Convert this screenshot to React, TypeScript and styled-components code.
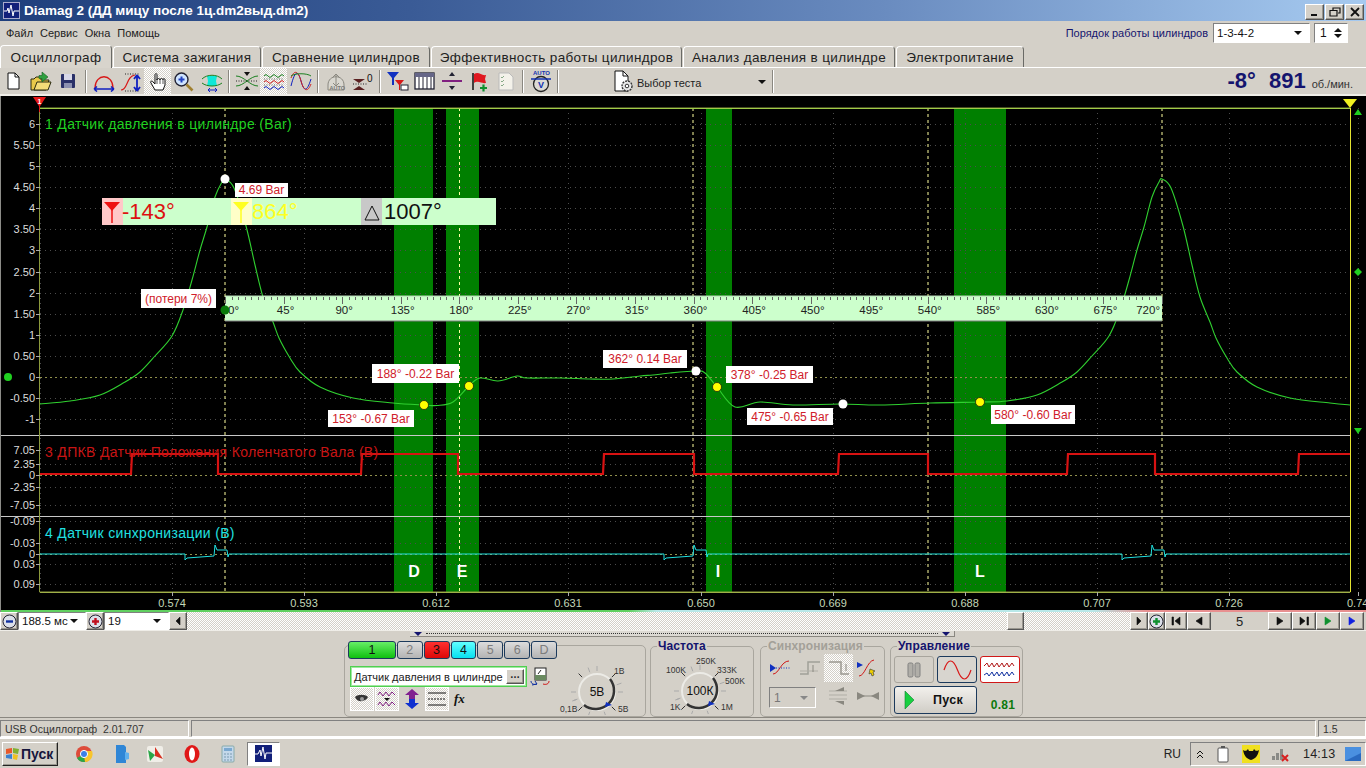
import React from "react";
import styled, { createGlobalStyle, css } from "styled-components";

const Global = createGlobalStyle`
  html, body { margin: 0; padding: 0; background: #d4d0c8; overflow: hidden; }
  * { box-sizing: border-box; }
`;

const raised = css`
  border: 1px solid;
  border-color: #fff #555 #555 #fff;
  box-shadow: inset -1px -1px #9a978f;
  background: #d4d0c8;
`;
const sunken = css`
  border: 1px solid;
  border-color: #808080 #fff #fff #808080;
`;
const dither = css`
  background: repeating-conic-gradient(#fff 0 25%, #d4d0c8 0 50%) 0 0 / 2px 2px;
`;

const Page = styled.div`
  width: 1366px; height: 768px; overflow: hidden; display: flex; flex-direction: column;
  background: #d4d0c8; font-family: "Liberation Sans", Arial, sans-serif; color: #111;
`;
const TitleBar = styled.div`
  height: 21px; flex: none; display: flex; align-items: center; padding: 0 2px 0 3px;
  background: linear-gradient(90deg, #1f3f7c 0%, #3a5b96 30%, #6a8cc0 65%, #a6caf0 100%);
`;
const TitleText = styled.div`
  flex: 1; margin-left: 4px; color: #fff; font-weight: bold; font-size: 13.5px; white-space: nowrap;
`;
const WinButton = styled.div`
  ${raised}; width: 19px; height: 16px; margin-top: 3px; margin-left: 1px; display: flex; align-items: center; justify-content: center;
`;
const MenuRow = styled.div`
  height: 24px; flex: none; display: flex; align-items: center; padding-left: 6px; gap: 7px; font-size: 11px;
`;
const MenuItem = styled.span` color: #222; `;
const OrderBox = styled.div`
  flex: 1; display: flex; align-items: center; justify-content: flex-end;
`;
const OrderLabel = styled.span` color: #14146e; font-size: 11px; margin-right: 5px; `;
const Combo = styled.div<{ $w: number; $h?: number }>`
  ${sunken}; width: ${p => p.$w}px; height: ${p => p.$h ?? 20}px; background: #fff; display: flex; align-items: center;
  justify-content: space-between; padding: 0 7px 0 3px; font-size: 11.5px; color: #111; white-space: nowrap;
`;
const Arrow = styled.i<{ $c?: string }>`
  display: block; width: 0; height: 0; border-left: 4px solid transparent; border-right: 4px solid transparent;
  border-top: 4px solid ${p => p.$c ?? "#111"};
`;
const Spin = styled.div`
  ${sunken}; width: 34px; height: 20px; margin: 0 18px 0 4px; background: #fff; display: flex; align-items: center; justify-content: space-between;
  padding: 0 5px; font-size: 12px;
`;
const SpinArrows = styled.div`
  display: flex; flex-direction: column; gap: 2px;
`;
const ArrowUp = styled.i`
  display: block; width: 0; height: 0; border-left: 4px solid transparent; border-right: 4px solid transparent; border-bottom: 4px solid #111;
`;
const TabRow = styled.div`
  height: 23px; flex: none; display: flex; align-items: flex-end; border-bottom: 1px solid #fff;
`;
const Tab = styled.div<{ $w: number; $active?: boolean }>`
  width: ${p => p.$w}px; height: ${p => (p.$active ? 23 : 21)}px; margin-right: 1px; padding-top: 1px;
  border: 1px solid #fff; border-right-color: #6a6a66; border-bottom: none; border-radius: 4px 4px 0 0;
  display: flex; align-items: center; justify-content: center; font-size: 13.5px; letter-spacing: 0.35px; color: #222;
  background: ${p => (p.$active ? "#d8d4cc" : "#d4d0c8")}; white-space: nowrap; position: relative;
  ${p => p.$active && "margin-bottom: -1px; z-index: 1;"}
`;
const Toolbar = styled.div`
  height: 28px; flex: none; display: flex; align-items: center; padding-left: 1px; border-bottom: 2px solid #f0eee8;
`;
const ToolButton = styled.div<{ $on?: boolean }>`
  width: 27px; height: 26px; flex: none; display: flex; align-items: center; justify-content: center;
  ${p => p.$on && dither}
`;
const ToolSep = styled.div`
  width: 8px; height: 23px; flex: none; display: flex; justify-content: center;
  &::before { content: ""; width: 2px; background: linear-gradient(90deg, #8a8780 50%, #fff 50%); }
`;
const TestSelect = styled.div`
  width: 207px; height: 26px; flex: none; display: flex; align-items: center; padding-left: 51px; font-size: 11px; color: #222; gap: 3px;
`;
const TestLabel = styled.span` padding-top: 3px; `;
const TestArrow = styled.div` margin-left: 54px; padding-top: 2px; `;
const Rpm = styled.div`
  flex: 1; display: flex; justify-content: flex-end; align-items: baseline; padding-right: 13px; color: #14146e;
`;
const RpmValue = styled.b<{ $gap: number }>`
  font-size: 22px; margin-right: ${p => p.$gap}px; font-weight: bold;
`;
const RpmUnit = styled.span` font-size: 11px; color: #333; `;

const ChartBox = styled.div`
  position: relative; height: 516px; flex: none; background: #000; border-left: 1px solid #8c8c88; overflow: hidden;
`;
const ChartSvg = styled.svg` position: absolute; left: -1px; top: 0; display: block; `;
const Caption = styled.div<{ $y: number; $c: string }>`
  position: absolute; left: 44px; top: ${p => p.$y}px; color: ${p => p.$c}; font-size: 14px; line-height: 16px; white-space: nowrap; letter-spacing: 0.33px;
`;
const Note = styled.div<{ $x: number; $y: number; $w: number; $h: number }>`
  position: absolute; left: ${p => p.$x - 1}px; top: ${p => p.$y}px; width: ${p => p.$w}px; height: ${p => p.$h}px;
  background: #fff; color: #d0202a; font-size: 12px; display: flex; align-items: center; justify-content: center; white-space: nowrap;
`;
const DeltaBar = styled.div`
  position: absolute; left: 101px; top: 102px; width: 394px; height: 27px; background: #ccffcc; display: flex;
`;
const DeltaIcon = styled.div<{ $bg: string }>`
  width: 21px; height: 27px; flex: none; background: ${p => p.$bg}; display: flex; align-items: center; justify-content: center;
`;
const DeltaText = styled.div<{ $c: string; $w: number; $ml: number }>`
  width: ${p => p.$w}px; margin-left: ${p => p.$ml}px; flex: none; color: ${p => p.$c}; font-size: 22px; line-height: 27px; white-space: nowrap;
`;
const BandLetter = styled.div<{ $x: number }>`
  position: absolute; left: ${p => p.$x - 1}px; top: 467px; width: 20px; text-align: center; color: #fff; font-weight: bold; font-size: 16px; line-height: 18px;
`;
const EdgeLine = styled.div`
  position: absolute; left: 0; right: 0; bottom: 0; height: 2px;
  background: linear-gradient(90deg, #60d060 0 46%, #b8e8e8 48% 80%, #e89090 84% 100%);
`;

const ScrollRow = styled.div`
  height: 18px; flex: none; display: flex; align-items: stretch;
`;
const MiniBtn = styled.div<{ $w: number }>`
  ${raised}; width: ${p => p.$w}px; flex: none; display: flex; align-items: center; justify-content: center;
`;
const Track = styled.div`
  ${dither}; width: 943px; flex: none; display: flex; padding-left: 820px;
`;
const Thumb = styled.div` ${raised}; width: 17px; `;
const PageNum = styled.div`
  width: 57px; flex: none; display: flex; align-items: center; justify-content: center; font-size: 13px; color: #222;
`;
const Splitter = styled.div`
  height: 7px; flex: none; padding-left: 410px; border-top: 1px solid #efede8;
`;
const SplitBar = styled.div`
  width: 545px; height: 6px; background: #dcd9d2; display: flex; align-items: center; justify-content: space-between; padding: 0 4px;
  border-bottom: 1px solid #8a8780; border-right: 1px solid #8a8780;
`;
const SplitDots = styled.div` flex: 1; margin: 0 4px; border-top: 1px dotted #333; `;
const Panels = styled.div`
  height: 81px; flex: none; display: flex; align-items: flex-start; padding: 8px 0 0 344px; border-bottom: 1px solid #8a8780;
`;
const Group = styled.fieldset<{ $w: number; $ml?: number; $legend?: boolean }>`
  width: ${p => p.$w}px; margin: 0 0 0 ${p => p.$ml ?? 0}px; padding: 0; border: 1px solid #a9a69e; border-radius: 5px; min-width: 0; flex: none; position: relative;
  height: ${p => (p.$legend ? 77 : 72)}px; ${p => p.$legend && "margin-top: -5px;"}
`;
const Legend = styled.legend<{ $muted?: boolean }>`
  font-size: 12px; font-weight: bold; color: ${p => (p.$muted ? "#a3a098" : "#14146e")}; padding: 0 1px; margin-left: 6px; line-height: 12px; letter-spacing: 0.1px;
`;
const GroupOne = styled.div` display: flex; margin-top: -5px; `;
const ChColumn = styled.div` width: 212px; flex: none; padding-left: 3px; `;
const ChRow = styled.div` display: flex; gap: 1px; `;
const ChBtn = styled.div<{ $w?: number; $bg?: string; $dim?: boolean }>`
  width: ${p => p.$w ?? 26}px; height: 18px; border: 1px solid #1c3a5c; border-radius: 3px; display: flex; align-items: center; justify-content: center;
  font-size: 12.5px; color: ${p => (p.$dim ? "#7d7d7d" : "#111")};
  background: ${p => p.$bg ?? "linear-gradient(#dcdcdc, #b4b4b4)"};
`;
const NameRow = styled.div` display: flex; align-items: center; margin: 7px 0 0 2px; gap: 3px; `;
const NameBox = styled.div`
  width: 177px; height: 21px; background: #fff; border: 1px solid #50d050; outline: 1px solid #a0e8a0; outline-offset: -2px; display: flex; align-items: center; justify-content: space-between;
  font-size: 11px; padding: 0 2px 0 3px; white-space: nowrap; color: #222;
`;
const DotsBtn = styled.div`
  ${raised}; width: 18px; height: 15px; font-size: 10px; line-height: 10px; text-align: center; font-weight: bold;
`;
const IconRow = styled.div` display: flex; align-items: center; gap: 1px; margin: 0 0 0 2px; `;
const IconCell = styled.div<{ $w?: number; $on?: boolean }>`
  width: ${p => p.$w ?? 24}px; height: 24px; flex: none; display: flex; align-items: center; justify-content: center;
  ${p => p.$on && css`${dither}; border: 1px solid #fff;`}
`;
const FxText = styled.span`
  font-family: "Liberation Serif", serif; font-style: italic; font-weight: bold; font-size: 13px; color: #111; margin-left: 4px;
`;
const KnobSpace = styled.div<{ $mt: number }>` margin-top: ${p => p.$mt}px; flex: none; line-height: 0; `;
const SyncGrid = styled.div` display: grid; grid-template-columns: repeat(4, 29px); margin: 2px 0 0 5px; grid-auto-rows: 28px; `;
const SyncCell = styled.div<{ $on?: boolean }>`
  display: flex; align-items: center; justify-content: center; ${p => p.$on && dither}
`;
const SyncCombo = styled.div`
  ${sunken}; grid-column: span 2; width: 47px; height: 21px; margin: 5px 0 0 3px; display: flex; align-items: center; justify-content: space-between; padding: 0 7px 0 4px;
  font-size: 12px; color: #777;
`;
const CtrlGrid = styled.div` display: grid; grid-template-columns: 43px 43px 43px; margin: 4px 0 0 3px; row-gap: 3px; `;
const CtrlBtn = styled.div<{ $c?: string; $bg?: string }>`
  height: 27px; width: 40px; border: 1px solid ${p => p.$c ?? "#1c3a5c"}; border-radius: 3px; display: flex; align-items: center; justify-content: center;
  background: ${p => p.$bg ?? "#d8d5cf"};
`;
const StartBtn = styled.div`
  grid-column: span 2; width: 83px; height: 28px; border: 1px solid #1c3a5c; border-radius: 3px; background: linear-gradient(#f2f0ec, #d0cdc6);
  display: flex; align-items: center; font-size: 12.5px; font-weight: bold; padding-left: 9px; letter-spacing: 0.3px; gap: 18px;
`;
const Ratio = styled.div`
  align-self: end; text-align: center; color: #0d7a0d; font-weight: bold; font-size: 12px; line-height: 18px; padding-left: 3px; letter-spacing: 0.3px;
`;

const StatusBar = styled.div`
  height: 20px; flex: none; display: flex; gap: 2px; padding-top: 2px; font-size: 10.5px; color: #333; border-bottom: 1px solid #fff;
`;
const StatusCell = styled.div<{ $w?: number; $grow?: boolean }>`
  ${sunken}; height: 17px; display: flex; align-items: center; padding-left: 4px;
  ${p => (p.$grow ? "flex: 1;" : `width: ${p.$w}px; flex: none;`)}
`;
const Taskbar = styled.div`
  height: 30px; flex: none; display: flex; align-items: center; padding-left: 2px; border-top: 1px solid #fff;
`;
const StartButton = styled.div`
  ${raised}; width: 56px; height: 24px; border-color: #fff #222 #222 #fff; display: flex; align-items: center; gap: 1px; padding-left: 2px;
  font-weight: bold; font-size: 14px; color: #16163c;
`;
const TaskIcon = styled.div<{ $ml: number; $active?: boolean }>`
  margin-left: ${p => p.$ml}px; width: ${p => (p.$active ? 33 : 24)}px; height: 24px; flex: none; display: flex; align-items: center; justify-content: center;
  ${p => p.$active && css`${sunken}; background: #fff;`}
`;
const TaskSpacer = styled.div` flex: 1; `;
const Lang = styled.span` font-size: 12px; margin-right: 9px; color: #222; `;
const Tray = styled.div`
  ${sunken}; width: 176px; height: 24px; display: flex; align-items: center; padding-left: 2px; font-size: 12.5px; color: #222;
`;
const TrayItem = styled.div<{ $w: number }>` width: ${p => p.$w}px; flex: none; display: flex; align-items: center; justify-content: center; `;
const Clock = styled.span` width: 40px; margin: 0 2px 0 6px; letter-spacing: 0.2px; white-space: nowrap; `;

const Svg = ({ w = 22, h = 22, children }: { w?: number; h?: number; children: React.ReactNode }) => (
  <svg width={w} height={h} viewBox={`0 0 ${w} ${h}`} fill="none">{children}</svg>
);
const IDoc = () => <Svg><path d="M4 3h7l4 4v12H4z" fill="#fff" stroke="#111" /><path d="M11 3v4h4" stroke="#111" /></Svg>;
const IOpen = () => <Svg w={24}><path d="M1 20V9h3l2-2h5v3h8l-3 10z" fill="#e8c84a" stroke="#2a2a10" /><path d="M4 20l3-8h14l-3 8z" fill="#f4dc78" stroke="#2a2a10" /><path d="M12 2l6 5-6 5V8.500H9v-3h3z" fill="#30a040" stroke="#156020" strokeWidth=".6" /></Svg>;
const ISave = () => <Svg><rect x="3" y="4" width="14" height="14" rx="1" fill="#2a3068" /><rect x="6" y="4" width="8" height="6" fill="#d8d8e8" /><rect x="6" y="13" width="8" height="5" fill="#8c90b0" /></Svg>;
const IArch = () => <Svg w={26}><path d="M4 18C4 3 22 3 22 18" stroke="#d81818" strokeWidth="1.3" /><path d="M3 19h20M3 19l3-2.500M3 19l3 2.500M23 19l-3-2.500M23 19l-3 2.500" stroke="#1020c0" strokeWidth="1.6" /></Svg>;
const ISRise = () => <Svg w={26}><path d="M3 20C10 20 8 6 17 5" stroke="#d81818" strokeWidth="1.2" /><path d="M7 4h15M7 21h15" stroke="#222" strokeDasharray="1 1.500" /><path d="M19 5v16M19 5l-3 4M19 5l3 4M19 21l-3-4M19 21l3-4" stroke="#1020c0" strokeWidth="1.8" /></Svg>;
const IHand = () => <Svg><path d="M6 12c-2-2-3 0-2 1l4 7h8l2-5v-5c0-2-2-2-2 0 0-2-3-2-3 0 0-2-3-2-3 0V5c0-2-2-2-2 0v9z" fill="#fff" stroke="#111" /><path d="M10 9v5M13 9v5M16 10v4" stroke="#111" strokeWidth=".7" /></Svg>;
const IZoom = () => <Svg w={24}><circle cx="8.500" cy="9.500" r="6.500" fill="#cfe4ff" stroke="#223" strokeWidth="1.400" /><path d="M13.500 14.500l6 6" stroke="#a08030" strokeWidth="2.600" /><path d="M5.500 9.500h6M8.500 6.500v6" stroke="#2040c0" strokeWidth="2" /></Svg>;
const ICyan = () => <Svg w={24}><path d="M7 6h10l-1 5 1 5H7l1-5z" fill="#10e8d8" /><path d="M2 9c5-5 15-5 20 0M2 13c5 4 15 4 20 0" stroke="#1a8020" /><path d="M8 20h9M8 20l2-2M8 20l2 2M17 20l-2-2M17 20l-2 2" stroke="#1020c0" /></Svg>;
const ICross = () => <Svg w={26}><path d="M2 6c8 0 14 10 22 10M2 16c8 0 14-10 22-10" stroke="#1a8020" /><path d="M2 11h22" stroke="#222" strokeDasharray="1 1.500" /><path d="M10 2h6l-3 4zM10 20h6l-3-4z" fill="#111" /></Svg>;
const IWaves = () => <Svg w={24}><path d="M2 6q2-3 4 0t4 0 4 0 4 0 4 0" stroke="#1a8020" /><path d="M2 12q2-3 4 0t4 0 4 0 4 0 4 0" stroke="#d02020" /><path d="M2 18q2-3 4 0t4 0 4 0 4 0 4 0" stroke="#1020c0" /><path d="M2 9h20M2 15h20" stroke="#333" strokeDasharray="1 1.500" strokeWidth=".7" /></Svg>;
const IWaves2 = () => <Svg w={24}><path d="M2 16C6 0 9 0 12 11s6 11 10-2" stroke="#1020c0" /><path d="M2 8c3-8 7-8 10 3s7 11 10 3" stroke="#d02020" /><path d="M2 6c4-3 16-3 20 0" stroke="#1a8020" /></Svg>;
const IAuto = () => <Svg w={24}><path d="M4 15C4 4 20 4 20 15v5H4z" fill="#d9d7d0" stroke="#8a8880" /><path d="M12 5v10M9 7l3-3 3 3M9 13l3 3 3-3" stroke="#8a8880" /><text x="5.500" y="20" fontSize="5.500" fontFamily="Liberation Sans" fontWeight="bold" fill="#777">AUTO</text></Svg>;
const IZero = () => <Svg w={26}><path d="M3 9l6 4 6-4zM3 20l6-4 6 4z" fill="#5a2020" /><path d="M3 14h14" stroke="#222" strokeDasharray="1 1.500" /><text x="17" y="12" fontSize="10" fontFamily="Liberation Sans" fill="#111">0</text></Svg>;
const IFilter = () => <Svg w={24}><path d="M1 2h12l-5 6v7H6V8z" fill="#1030c0" /><path d="M9 10h9l-4 5v5h-1v-5z" fill="#d81818" /><rect x="15" y="15" width="7" height="5" fill="#fff" stroke="#223" /></Svg>;
const ITable = () => <Svg w={24}><rect x="2" y="3" width="19" height="16" fill="#fff" stroke="#223" strokeWidth="1.300" /><rect x="2" y="3" width="19" height="4" fill="#668" /><path d="M6 7v12M10 7v12M14 7v12M18 7v12" stroke="#223" /></Svg>;
const ILines = () => <Svg w={24}><path d="M2 11h20" stroke="#802080" strokeWidth="2" /><path d="M9 6h6l-3-4zM9 16h6l-3 4z" fill="#223" /></Svg>;
const IFlag = () => <Svg w={24}><path d="M6 3v17" stroke="#111" strokeWidth="1.500" /><path d="M7 4c5-3 7 2 12 1l-1 4 1 4c-5 1-7-3-12 0z" fill="#e01820" /><path d="M13 18h7M16.500 14.500v7" stroke="#109030" strokeWidth="2.200" /></Svg>;
const IChecklist = () => <Svg><path d="M4 3h10l4 4v13H4z" fill="#f4f2ea" stroke="#bbb" /><path d="M6 7l1 1 2-2M6 11l1 1 2-2M6 15l1 1 2-2" stroke="#8a8" /></Svg>;
const IAutoV = () => <Svg w={24} h={24}><text x="4" y="6" fontSize="6" fontFamily="Liberation Sans" fontWeight="bold" fill="#1030b0">AUTO</text><circle cx="12" cy="15" r="7.500" fill="#dcdad4" stroke="#222" strokeWidth="1.300" /><text x="9" y="19" fontSize="9" fontFamily="Liberation Sans" fontWeight="bold" fill="#1030b0">V</text><path d="M2 10h20" stroke="#1030b0" strokeWidth="1.500" /></Svg>;
const IGearDoc = () => <Svg w={21} h={24}><path d="M2 2h8l5 5v15H2z" fill="#fff" stroke="#111" /><path d="M10 2v5h5" stroke="#111" /><circle cx="14" cy="17" r="5" fill="#e8e8e8" stroke="#333" strokeWidth="1.400" strokeDasharray="2 1" /><circle cx="14" cy="17" r="1.800" fill="#fff" stroke="#333" /></Svg>;

const Filter = ({ c }: { c: string }) => <Svg w={17} h={26}><path d="M0 3h16L8 12z" fill={c} /><path d="M8 10v14" stroke={c} strokeWidth="1.500" /></Svg>;
const Tri = () => <Svg w={16} h={22}><path d="M1 19L8 5l7 14z" stroke="#111" fill="#c8c8c8" /></Svg>;

type Mark = { t: string; x: number; y: number };
const knobTicks = [-225, -200, -180, -135, -110, -90, -45, -20, 0, 45, 70, 110, 135, 160];
const Knob = ({ label, cx, cy, w, h, marks }: { label: string; cx: number; cy: number; w: number; h: number; marks: Mark[] }) => (
  <svg width={w} height={h} viewBox={`0 0 ${w} ${h}`} fill="none">
    {knobTicks.map((a, i) => {
      const r = a * Math.PI / 180;
      return <line key={i} x1={cx + Math.cos(r) * 21} y1={cy + Math.sin(r) * 21} x2={cx + Math.cos(r) * 26} y2={cy + Math.sin(r) * 26} stroke={i % 3 === 0 ? "#333" : "#aaa"} strokeWidth="1" />;
    })}
    <circle cx={cx} cy={cy} r={18} fill="#d4d0c8" stroke="#ecebe6" strokeWidth="2" />
    <path d={`M${cx + 13} ${cy - 13}A18.500 18.500 0 0 1 ${cx - 13} ${cy + 13}`} stroke="#333" strokeWidth="2.500" />
    <path d={`M${cx + 9} ${cy + 10}l6 3-7 2z`} fill="#1030c0" />
    <text x={cx} y={cy + 4} textAnchor="middle" fontFamily="Liberation Sans" fontSize="12" fill="#111">{label}</text>
    {marks.map(m => <text key={m.t} x={m.x} y={m.y} fontFamily="Liberation Sans" fontSize="8.500" fill="#333">{m.t}</text>)}
  </svg>
);

const yLabels1: [string, number][] = [["6", 124], ["5.50", 145], ["5", 166], ["4.50", 187], ["4", 208], ["3.50", 229], ["3", 250], ["2.50", 272], ["2", 293], ["1.50", 314], ["1", 335], ["0.50", 356], ["0", 377], ["-0.50", 398], ["-1", 419]];
const yLabels3: [string, number][] = [["7.05", 450], ["2.35", 464], ["0", 475], ["-2.35", 487], ["-7.05", 505]];
const yLabels4: [string, number][] = [["-0.09", 521], ["-0.03", 543], ["0", 554], ["0.03", 564], ["0.09", 584]];
const xLabels: [string, number][] = [["0.574", 172], ["0.593", 304], ["0.612", 436], ["0.631", 568], ["0.650", 701], ["0.669", 833], ["0.688", 965], ["0.707", 1097], ["0.726", 1229], ["0.74", 1358]];

const peak: [number, number][] = [[40, 404], [70, 401], [100, 395], [125, 382], [140, 372], [155, 356], [172, 336], [183, 310], [192, 280], [200, 250], [207, 227], [215, 197], [222, 182], [225, 179], [234, 188], [246, 226], [255, 265], [263, 297], [273, 322], [279, 338], [290, 358], [300, 372], [320, 387], [353, 398], [393, 403], [424, 405], [437, 405.500]];
const mid: [number, number][] = [[453, 402], [469, 386], [480, 378], [498, 381], [517, 376], [527, 378], [560, 378], [590, 379], [613, 379], [640, 376], [653, 375], [670, 373], [696, 371], [705, 373], [717, 387], [735, 407], [760, 402], [793, 405], [840, 404], [880, 405], [930, 403], [980, 402]];
const peak2 = peak.filter(p => p[0] > 60 && p[0] <= 415).map(p => [p[0] + 937, p[1]] as [number, number]);
const smooth = (pts: [number, number][]) => {
  let d = `M${pts[0][0]} ${pts[0][1]}`;
  for (let i = 0; i < pts.length - 1; i++) {
    const p0 = pts[Math.max(i - 1, 0)];
    const p1 = pts[i];
    const p2 = pts[i + 1];
    const p3 = pts[Math.min(i + 2, pts.length - 1)];
    const c1 = [p1[0] + (p2[0] - p0[0]) / 6, p1[1] + (p2[1] - p0[1]) / 6];
    const c2 = [p2[0] - (p3[0] - p1[0]) / 6, p2[1] - (p3[1] - p1[1]) / 6];
    d += `C${c1[0].toFixed(1)} ${c1[1].toFixed(1)} ${c2[0].toFixed(1)} ${c2[1].toFixed(1)} ${p2[0]} ${p2[1]}`;
  }
  return d;
};
const greenPath = smooth([...peak, ...mid, ...peak2, [1350, 405]]);

const redEdges = [131, 218, 361, 458, 603, 694, 838, 928, 1067, 1155, 1298];
const redPts = (() => {
  const out: string[] = ["40,474"];
  let high = false;
  redEdges.forEach(x => {
    const a = high ? 454 : 474;
    const b = high ? 474 : 454;
    out.push(`${x},${a}`, `${x + (high ? 0 : 1)},${b}`);
    high = !high;
  });
  out.push("1350,454");
  return out.join(" ");
})();
const blip = (d: number) => [[183, 554], [185, 554], [185, 560], [187, 558], [214, 556], [215, 545], [217, 550], [227, 550], [228, 557], [229, 554]].map(p => `${p[0] + d},${p[1]}`);
const cyanPts = ["40,554", ...blip(0), ...blip(479), ...blip(937), "1350,554"].join(" ");

const Chart = () => {
  const hGrid = [...yLabels1, ...yLabels3, ...yLabels4].map(l => l[1]);
  const vGrid = [40, ...xLabels.map(l => l[1])];
  const Y = (y: number) => y - 96;
  const minor = Array.from({ length: 145 }, (_, i) => i);
  return (
    <ChartBox>
      <ChartSvg width={1366} height={516} viewBox="0 96 1366 516" fill="none">
        {[[394, 39], [446, 33], [706, 26], [954, 52]].map(([x, w]) => <rect key={x} x={x} y={108} width={w} height={484} fill="#007f00" />)}
        {hGrid.map(y => <line key={y} x1={40} x2={1350} y1={y + .5} y2={y + .5} stroke="#4c4c4c" strokeDasharray="1 4" />)}
        {vGrid.map(x => <line key={x} x1={x + .5} x2={x + .5} y1={108} y2={592} stroke="#4c4c4c" strokeDasharray="1 4" />)}
        {[225, 459.500, 693, 928, 1162].map(x => <line key={x} x1={x} x2={x} y1={108} y2={592} stroke="#ffffa0" strokeDasharray="3 3" />)}
        {[377, 475, 554].map(y => <line key={y} x1={40} x2={1350} y1={y + .5} y2={y + .5} stroke="#90904c" strokeDasharray="2 3" />)}
        <line x1={0} x2={1350} y1={435.500} y2={435.500} stroke="#c8c8c8" />
        <line x1={0} x2={1350} y1={516.500} y2={516.500} stroke="#c8c8c8" />
        <path d="M39.500 108V592H1350.500V108Z" stroke="#8c9a3c" />
        <line x1={1350.500} x2={1350.500} y1={108} y2={592} stroke="#e4e430" />
        <line x1={40} x2={1350} y1={108.500} y2={108.500} stroke="#a0cc48" />
        <line x1={40} x2={1350} y1={592.500} y2={592.500} stroke="#a0b048" />
        <path d={greenPath} stroke="#30d030" strokeWidth="1.100" />
        <polyline points={redPts} stroke="#d81212" strokeWidth="2.200" />
        <polyline points={cyanPts} stroke="#20e0e0" strokeWidth="1" />
        <path d="M33 97h13l-6.500 10z" fill="#e81818" />
        <text x={39.500} y={104} fontSize="7" textAnchor="middle" fill="#fff" fontFamily="Liberation Sans" fontWeight="bold">1</text>
        <line x1={39.500} x2={39.500} y1={104} y2={112} stroke="#e81818" />
        <path d="M1343 99h14l-7 9z" fill="#f0f020" />
        <circle cx={8} cy={377} r={4} fill="#20d020" />
        <path d="M1354 115h8l-4-6z" fill="#20d020" />
        <path d="M1354 272l4-4 4 4-4 4z" fill="#20d020" />
        <path d="M1354 428h8l-4 6z" fill="#20d020" />
        {[...yLabels1, ...yLabels3, ...yLabels4].map(([t, y]) => (
          <g key={t + y}>
            <text x={35} y={y + 4} textAnchor="end" fontSize="11" fontFamily="Liberation Sans" fill="#dcdcdc">{t}</text>
            <line x1={36} x2={40} y1={y + .5} y2={y + .5} stroke="#aaa" />
          </g>
        ))}
        {xLabels.slice(0, -1).map(([t, x]) => (
          <g key={t}>
            <line x1={x + .5} x2={x + .5} y1={592} y2={596} stroke="#aaa" />
            <text x={x} y={607} textAnchor="middle" fontSize="11" fontFamily="Liberation Sans" fill="#c4d8b8">{t}</text>
          </g>
        ))}
        <line x1={1358.500} x2={1358.500} y1={592} y2={596} stroke="#aaa" />
        <text x={1347} y={607} fontSize="11" fontFamily="Liberation Sans" fill="#c4d8b8">0.74</text>
        <rect x={225} y={296} width={937} height={25} fill="#ccffcc" />
        <line x1={225} x2={1162} y1={321} y2={321} stroke="#808080" />
        <line x1={225} x2={1162} y1={296} y2={296} stroke="#b8d8b8" />
        {minor.map(i => {
          const x = Math.round(225 + i * 6.507) + .5;
          const major = i % 9 === 0;
          return <line key={i} x1={x} x2={x} y1={297} y2={major ? 304 : 300} stroke="#666" />;
        })}
        {Array.from({ length: 17 }, (_, i) => i * 45).map(d => {
          const x = 227 + d * 1.3014;
          const first = d === 0;
          const last = d === 720;
          return <text key={d} x={first ? 228 : last ? 1160 : x} y={314} textAnchor={first ? "start" : last ? "end" : "middle"} fontSize="11.500" fontFamily="Liberation Sans" fill="#222">{d}°</text>;
        })}
        {[[225, 179], [696, 371], [843, 404]].map(([x, y]) => <circle key={x} cx={x} cy={y} r={4.500} fill="#fff" />)}
        {[[424, 405], [469, 386], [717, 387], [980, 402]].map(([x, y]) => <circle key={x} cx={x} cy={y} r={4.500} fill="#ffff00" stroke="#111" strokeWidth=".7" />)}
        <circle cx={225} cy={310} r={4.500} fill="#0a7a0a" />
      </ChartSvg>
      <Caption $y={Y(116)} $c="#20d020">1 Датчик давления в цилиндре (Bar)</Caption>
      <Caption $y={Y(444)} $c="#c81414">3 ДПКВ Датчик Положения Коленчатого Вала (В)</Caption>
      <Caption $y={Y(525)} $c="#20e0e0">4 Датчик синхронизации (В)</Caption>
      <Note $x={235} $y={Y(183)} $w={53} $h={14}>4.69 Bar</Note>
      <Note $x={141} $y={Y(289)} $w={75} $h={19}>(потери 7%)</Note>
      <Note $x={372} $y={Y(364)} $w={87} $h={19}>188° -0.22 Bar</Note>
      <Note $x={328} $y={Y(410)} $w={86} $h={17}>153° -0.67 Bar</Note>
      <Note $x={603} $y={Y(350)} $w={84} $h={18}>362° 0.14 Bar</Note>
      <Note $x={726} $y={Y(366)} $w={87} $h={17}>378° -0.25 Bar</Note>
      <Note $x={747} $y={Y(408)} $w={86} $h={17}>475° -0.65 Bar</Note>
      <Note $x={991} $y={Y(405)} $w={84} $h={19}>580° -0.60 Bar</Note>
      <DeltaBar>
        <DeltaIcon $bg="#ffc8c8"><Filter c="#ee1111" /></DeltaIcon>
        <DeltaText $c="#dd1111" $w={109} $ml={-1}>-143°</DeltaText>
        <DeltaIcon $bg="#ffffc8"><Filter c="#ffff22" /></DeltaIcon>
        <DeltaText $c="#ffff22" $w={109} $ml={0}>864°</DeltaText>
        <DeltaIcon $bg="#c8c8c8"><Tri /></DeltaIcon>
        <DeltaText $c="#111" $w={108} $ml={2}>1007°</DeltaText>
      </DeltaBar>
      <BandLetter $x={404}>D</BandLetter>
      <BandLetter $x={452}>E</BandLetter>
      <BandLetter $x={708}>I</BandLetter>
      <BandLetter $x={970}>L</BandLetter>
      <EdgeLine />
    </ChartBox>
  );
};

const Btn = ({ d, c = "#111", w = 12 }: { d: string; c?: string; w?: number }) => (
  <svg width={w} height={12} viewBox="0 0 12 12"><path d={d} fill={c} stroke={c} strokeWidth=".6" /></svg>
);
const Round = ({ c, plus }: { c: string; plus?: boolean }) => (
  <svg width={15} height={15} viewBox="0 0 15 15" fill="none">
    <circle cx="7.500" cy="7.500" r="6.500" fill="#dce0ea" stroke="#223" />
    <path d={plus ? "M4 7.500h7M7.500 4v7" : "M4 7.500h7"} stroke={c} strokeWidth="2.400" />
  </svg>
);

const App = () => (
  <Page>
    <Global />
    <TitleBar>
      <svg width="17" height="17" viewBox="0 0 17 17" fill="none"><rect x=".5" y=".5" width="16" height="16" fill="#12207a" stroke="#aac" /><path d="M1 9h3l1-3 1 5 2-8 2 11 1-5h5" stroke="#fff" /></svg>
      <TitleText>Diamag 2 (ДД мицу после 1ц.dm2выд.dm2)</TitleText>
      <WinButton><Svg w={10} h={10}><path d="M1 8h6" stroke="#111" strokeWidth="2" /></Svg></WinButton>
      <WinButton><Svg w={12} h={10}><path d="M4 3V1h7v5H9M1 3.500h7V9H1z" stroke="#111" strokeWidth="1.200" /></Svg></WinButton>
      <WinButton><Svg w={10} h={10}><path d="M1 1l8 8M9 1L1 9" stroke="#111" strokeWidth="1.800" /></Svg></WinButton>
    </TitleBar>
    <MenuRow>
      <MenuItem>Файл</MenuItem>
      <MenuItem>Сервис</MenuItem>
      <MenuItem>Окна</MenuItem>
      <MenuItem>Помощь</MenuItem>
      <OrderBox>
        <OrderLabel>Порядок работы цилиндров</OrderLabel>
        <Combo $w={97}>1-3-4-2<Arrow /></Combo>
        <Spin>1<SpinArrows><ArrowUp /><Arrow /></SpinArrows></Spin>
      </OrderBox>
    </MenuRow>
    <TabRow>
      <Tab $w={112} $active>Осциллограф</Tab>
      <Tab $w={148}>Система зажигания</Tab>
      <Tab $w={168}>Сравнение цилиндров</Tab>
      <Tab $w={251}>Эффективность работы цилиндров</Tab>
      <Tab $w={212}>Анализ давления в цилиндре</Tab>
      <Tab $w={128}>Электропитание</Tab>
    </TabRow>
    <Toolbar>
      <ToolButton><IDoc /></ToolButton>
      <ToolButton><IOpen /></ToolButton>
      <ToolButton><ISave /></ToolButton>
      <ToolSep />
      <ToolButton><IArch /></ToolButton>
      <ToolButton><ISRise /></ToolButton>
      <ToolButton $on><IHand /></ToolButton>
      <ToolButton><IZoom /></ToolButton>
      <ToolButton><ICyan /></ToolButton>
      <ToolSep />
      <ToolButton><ICross /></ToolButton>
      <ToolButton $on><IWaves /></ToolButton>
      <ToolButton><IWaves2 /></ToolButton>
      <ToolSep />
      <ToolButton><IAuto /></ToolButton>
      <ToolButton><IZero /></ToolButton>
      <ToolSep />
      <ToolButton><IFilter /></ToolButton>
      <ToolButton><ITable /></ToolButton>
      <ToolButton><ILines /></ToolButton>
      <ToolButton><IFlag /></ToolButton>
      <ToolButton><IChecklist /></ToolButton>
      <ToolSep />
      <ToolButton><IAutoV /></ToolButton>
      <ToolSep />
      <TestSelect><IGearDoc /><TestLabel>Выбор теста</TestLabel><TestArrow><Arrow /></TestArrow></TestSelect>
      <ToolSep />
      <Rpm>
        <RpmValue $gap={13}>-8°</RpmValue>
        <RpmValue $gap={6}>891</RpmValue>
        <RpmUnit>об./мин.</RpmUnit>
      </Rpm>
    </Toolbar>
    <Chart />
    <ScrollRow>
      <MiniBtn $w={18}><Round c="#1030a0" /></MiniBtn>
      <Combo $w={68} $h={18}>188.5 мс<Arrow /></Combo>
      <MiniBtn $w={18}><Round c="#c01020" plus /></MiniBtn>
      <Combo $w={65} $h={18}>19<Arrow /></Combo>
      <MiniBtn $w={18}><Btn d="M8 2L4 6l4 4z" /></MiniBtn>
      <Track><Thumb /></Track>
      <MiniBtn $w={18}><Btn d="M4 2l4 4-4 4z" /></MiniBtn>
      <MiniBtn $w={17}><Round c="#109030" plus /></MiniBtn>
      <MiniBtn $w={22}><Btn d="M2 2h1.500v8H2zM10 2L5 6l5 4z" /></MiniBtn>
      <MiniBtn $w={24}><Btn d="M9 2L3 6l6 4z" /></MiniBtn>
      <PageNum>5</PageNum>
      <MiniBtn $w={24}><Btn d="M3 2l6 4-6 4z" /></MiniBtn>
      <MiniBtn $w={24}><Btn d="M2 2l5 4-5 4zM9 2h1.500v8H9z" /></MiniBtn>
      <MiniBtn $w={24}><Btn d="M3 2l6 4-6 4z" c="#109030" /></MiniBtn>
      <MiniBtn $w={24}><Btn d="M3 2l6 4-6 4z" c="#1020e0" /></MiniBtn>
    </ScrollRow>
    <Splitter>
      <SplitBar>
        <Arrow $c="#14146e" />
        <SplitDots />
        <Arrow $c="#14146e" />
      </SplitBar>
    </Splitter>
    <Panels>
      <Group $w={302}>
        <GroupOne>
          <ChColumn>
            <ChRow>
              <ChBtn $w={48} $bg="linear-gradient(#66ee66, #10c010)">1</ChBtn>
              <ChBtn $dim>2</ChBtn>
              <ChBtn $bg="linear-gradient(#ff3030, #dd0808)">3</ChBtn>
              <ChBtn $bg="linear-gradient(#60ffff, #08e0f0)">4</ChBtn>
              <ChBtn $dim>5</ChBtn>
              <ChBtn $dim>6</ChBtn>
              <ChBtn $dim>D</ChBtn>
            </ChRow>
            <NameRow>
              <NameBox>Датчик давления в цилиндре<DotsBtn>…</DotsBtn></NameBox>
              <Svg w={20} h={20}><rect x="5" y="1" width="11" height="12" fill="#fff" stroke="#222" /><rect x="5" y="8" width="11" height="5" fill="#6a8a60" /><path d="M8 7l3-4" stroke="#222" /><path d="M1 14c0 3 3 4 6 3M2 18l5-1-2-3" stroke="#1030a0" /><path d="M19 14c0 3-3 4-6 3" stroke="#d01818" /></Svg>
            </NameRow>
            <IconRow>
              <IconCell $on><Svg w={18} h={14}><path d="M2 5c3-3 10-3 13 0-2 5-11 6-13 0z" fill="#333" /><circle cx="9" cy="7" r="2" fill="#999" /></Svg></IconCell>
              <IconCell $on><Svg w={20} h={20}><path d="M1 6l2-3 3 4 3-4 3 4 3-4 3 3" stroke="#802080" /><path d="M1 16l2-3 3 4 3-4 3 4 3-4 3 3" stroke="#802080" /><path d="M7 9h6l-3 3z" fill="#111" /></Svg></IconCell>
              <IconCell><Svg w={18} h={22}><path d="M9 1l7 6h-4v4H6V7H2z" fill="#802090" /><path d="M9 21l7-6h-4v-4H6v4H2z" fill="#1030d0" /></Svg></IconCell>
              <IconCell $on><Svg w={20} h={16}><path d="M1 2h18M1 14h18" stroke="#111" /><path d="M1 8h18" stroke="#111" strokeDasharray="2 1" /></Svg></IconCell>
              <FxText>fx</FxText>
            </IconRow>
          </ChColumn>
          <KnobSpace $mt={6}>
            <Knob label="5В" cx={40} cy={45} w={86} h={68} marks={[{ t: "1В", x: 57, y: 27 }, { t: "0,1В", x: 3, y: 65 }, { t: "5В", x: 61, y: 65 }]} />
          </KnobSpace>
        </GroupOne>
      </Group>
      <Group $w={104} $ml={4} $legend>
        <Legend>Частота</Legend>
        <KnobSpace $mt={4}>
          <Knob label="100К" cx={49} cy={35} w={102} h={58} marks={[{ t: "250K", x: 45, y: 8 }, { t: "100K", x: 15, y: 17 }, { t: "333K", x: 66, y: 17 }, { t: "500K", x: 74, y: 28 }, { t: "1K", x: 19, y: 54 }, { t: "1M", x: 70, y: 54 }]} />
        </KnobSpace>
      </Group>
      <Group $w={125} $ml={6} $legend>
        <Legend $muted>Синхронизация</Legend>
        <SyncGrid>
          <SyncCell><Svg w={24} h={20}><path d="M1 6l6 4-6 4z" fill="#1030c0" /><path d="M4 16C10 16 12 3 20 3" stroke="#d01818" /><path d="M7 10h15" stroke="#1030c0" strokeDasharray="1 1.500" /></Svg></SyncCell>
          <SyncCell><Svg w={24} h={20}><path d="M2 16h8V4h12" stroke="#a0a098" strokeWidth="1.500" /><path d="M2 13h18" stroke="#b0aea6" /><path d="M15 7v7" stroke="#8a8880" /></Svg></SyncCell>
          <SyncCell $on><Svg w={24} h={20}><path d="M2 4h12v12h8" stroke="#9a9890" strokeWidth="1.500" /><path d="M19 6v7" stroke="#8a8880" /></Svg></SyncCell>
          <SyncCell><Svg w={24} h={20}><path d="M1 4l6 3-6 3z" fill="#1030c0" /><path d="M3 18C9 18 11 3 18 2" stroke="#d01818" /><path d="M14 11l5 2-2 1 1 3-2 1-1-3-2 1z" fill="#f0d000" stroke="#333" strokeWidth=".6" /></Svg></SyncCell>
          <SyncCombo>1<Arrow $c="#888" /></SyncCombo>
          <SyncCell><Svg w={24} h={20}><path d="M2 5h18M2 9h18M2 13h18" stroke="#b0aea6" /><path d="M17 1l-9 4h9zM17 19l-9-4h9z" fill="#8a8880" /></Svg></SyncCell>
          <SyncCell><Svg w={24} h={20}><path d="M1 6l8 4-8 4zM23 6l-8 4 8 4z" fill="#8a8880" /><path d="M1 10h22" stroke="#8a8880" /></Svg></SyncCell>
        </SyncGrid>
      </Group>
      <Group $w={133} $ml={5} $legend>
        <Legend>Управление</Legend>
        <CtrlGrid>
          <CtrlBtn $c="#a8a59d" $bg="#d4d0c8"><Svg w={16} h={18}><rect x="2" y="2" width="5" height="14" rx="1.500" fill="#b0aea8" stroke="#808080" /><rect x="9" y="2" width="5" height="14" rx="1.500" fill="#b0aea8" stroke="#808080" /></Svg></CtrlBtn>
          <CtrlBtn><Svg w={31} h={22}><path d="M2 11C6-1 11-1 15.500 11S25 23 29 11" stroke="#d81818" strokeWidth="1.200" /></Svg></CtrlBtn>
          <CtrlBtn $c="#d01818" $bg="#fff"><Svg w={34} h={22}><path d="M1 7l3-3 2 4 3-4 2 4 3-4 2 4 3-4 2 4 3-4 2 4 3-4 2 3" stroke="#b01818" /><path d="M1 16l3-2 2 3 3-4 2 4 3-4 2 4 3-4 2 4 3-4 2 4 3-4 2 3" stroke="#1030a0" /></Svg></CtrlBtn>
          <StartBtn><Svg w={11} h={22}><path d="M1 2l9 9-9 9z" fill="#18d040" stroke="#108030" strokeWidth=".6" /></Svg>Пуск</StartBtn>
          <Ratio>0.81</Ratio>
        </CtrlGrid>
      </Group>
    </Panels>
    <StatusBar>
      <StatusCell $w={189}>USB Осциллограф&nbsp;&nbsp;2.01.707</StatusCell>
      <StatusCell $grow />
      <StatusCell $w={48}>1.5</StatusCell>
    </StatusBar>
    <Taskbar>
      <StartButton>
        <Svg w={15} h={15}><path d="M1 3l6-1v5l-6 1z" fill="#e8582a" /><path d="M8 2l6 1-1 5-5-1z" fill="#80b030" /><path d="M1 9l6-1v5l-6-1z" fill="#3a80d0" /><path d="M8 8l5 1-1 5-4-1z" fill="#f0c020" /></Svg>
        Пуск
      </StartButton>
      <TaskIcon $ml={14}><Svg w={18} h={18}><circle cx="9" cy="9" r="8" fill="#dd4b3a" /><path d="M9 9L2 13a8 8 0 0 0 8 4z" fill="#2aa748" /><path d="M9 9l1 8a8 8 0 0 0 7-11H9z" fill="#f8c52b" /><circle cx="9" cy="9" r="3.600" fill="#3b80e8" stroke="#fff" /></Svg></TaskIcon>
      <TaskIcon $ml={14}><Svg w={18} h={20}><path d="M3 1h8l2 2v16H3z" fill="#2f86d6" /><path d="M12 8l4 1v6l-4 1z" fill="#5fb0ee" /></Svg></TaskIcon>
      <TaskIcon $ml={9}><Svg w={20} h={20}><rect x="2" y="2" width="16" height="16" rx="2" fill="#f0eee8" /><path d="M3 6l7 5-5 6z" fill="#2aa748" /><path d="M10 3l8 12-8-3z" fill="#d83020" /></Svg></TaskIcon>
      <TaskIcon $ml={13}><Svg w={18} h={20}><ellipse cx="9" cy="10" rx="7.500" ry="9" fill="#e01818" /><ellipse cx="9" cy="10" rx="3" ry="6.500" fill="#fff" /></Svg></TaskIcon>
      <TaskIcon $ml={12}><Svg w={16} h={20}><rect x="2" y="2" width="12" height="16" rx="1" fill="#c4d8ea" stroke="#8aa" /><rect x="4" y="4" width="8" height="3" fill="#7aa8d0" /><path d="M4 10h8M4 13h8M4 16h8" stroke="#7a9ab0" strokeDasharray="2 1" /></Svg></TaskIcon>
      <TaskIcon $ml={7} $active><svg width="17" height="17" viewBox="0 0 17 17" fill="none"><rect width="17" height="17" fill="#12207a" /><path d="M0 9h3l2-4 1 6 2-9 2 12 1-6h6" stroke="#fff" /></svg></TaskIcon>
      <TaskSpacer />
      <Lang>RU</Lang>
      <Tray>
        <TrayItem $w={14}><Svg w={9} h={10}><path d="M1 5l3-3 3 3M1 9l3-3 3 3" stroke="#111" /></Svg></TrayItem>
        <TrayItem $w={32}><Svg w={12} h={18}><rect x="1" y="3" width="10" height="14" rx="1" fill="#fff" stroke="#555" /><rect x="4" y="1" width="4" height="2" fill="#555" /></Svg></TrayItem>
        <TrayItem $w={24}><Svg w={18} h={18}><rect width="18" height="18" fill="#f0e020" /><path d="M1 5c3 2 4 0 5-1l1 2h4l1-2c1 1 2 3 5 1-1 6-4 9-8 10-4-1-7-4-8-10z" fill="#111" /></Svg></TrayItem>
        <TrayItem $w={34}><Svg w={18} h={16}><path d="M1 14V10h3v4zM5 14V7h3v7zM9 14V3h3v11z" fill="#8a8a86" /><path d="M11 9l6 6M17 9l-6 6" stroke="#d82020" strokeWidth="2" /></Svg></TrayItem>
        <Clock>14:13</Clock>
        <Svg w={16} h={14}><rect width="16" height="14" fill="#4a90e0" /><path d="M0 14L16 6v8z" fill="#2a6ac0" /></Svg>
      </Tray>
    </Taskbar>
  </Page>
);

export default App;
